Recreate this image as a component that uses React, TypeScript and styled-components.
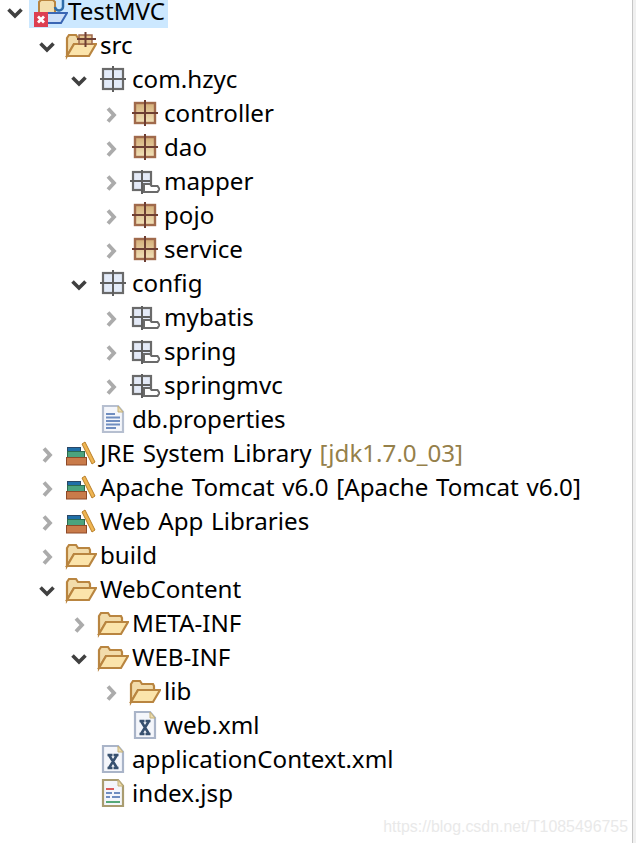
import React from "react";
import styled, { createGlobalStyle } from "styled-components";

const GlobalStyle = createGlobalStyle`
  html, body {
    margin: 0;
    padding: 0;
    background: #ffffff;
    overflow: hidden;
  }
`;

const Page = styled.div`
  position: relative;
  width: 636px;
  height: 843px;
  overflow: hidden;
  background: #fff;
  box-shadow: inset -3px 0 0 #f0f0f0, inset -4px 0 0 #c6c6c6;
`;

const Tree = styled.ul`
  list-style: none;
  margin: -6px 0 0;
  padding: 0;
  font-family: "Noto Sans", "Open Sans", sans-serif;
  font-size: 24.15px;
  word-spacing: 1.5px;
  color: #000;
`;

const Row = styled.li<{ $depth: number }>`
  display: flex;
  align-items: center;
  height: 34px;
  padding-left: ${(p) => 5 + p.$depth * 32}px;
`;

const Twisty = styled.span`
  flex: none;
  width: 20px;
  height: 20px;
  margin-right: 4px;
  display: flex;
  align-items: center;
  justify-content: center;
`;

const Cell = styled.span<{ $selected?: boolean }>`
  display: flex;
  align-items: center;
  height: 100%;
  padding: 0 3px;
  ${(p) => p.$selected && "background: #cce8ff;"}
`;

const IconSlot = styled.span`
  flex: none;
  width: 32px;
  height: 32px;
  margin-right: 4px;
  display: flex;
  align-items: center;
  justify-content: flex-start;

  svg {
    flex: none;
  }
`;

const Label = styled.span`
  white-space: nowrap;
  line-height: 22px;
`;

const Decoration = styled.span`
  color: #95804a;
`;

const Watermark = styled.div`
  position: absolute;
  right: 8px;
  bottom: 7px;
  font-family: "Liberation Sans", Arial, sans-serif;
  font-size: 15.9px;
  color: #e9e9e9;
`;

const Chevron = ({ open }: { open: boolean }) =>
  open ? (
    <svg width="20" height="20" viewBox="0 0 20 20">
      <path d="M3.500 8.500l6.500 6.500 6.500-6.500" fill="none" stroke="#404040" strokeWidth="3.600" />
    </svg>
  ) : (
    <svg width="20" height="20" viewBox="0 0 20 20">
      <path d="M7 5.500l6 6.500-6 6.500" fill="none" stroke="#ababab" strokeWidth="3.800" />
    </svg>
  );

const PackageIcon = ({ tone }: { tone: "mono" | "brown" }) => (
  <svg width="32" height="32" viewBox="0 0 32 32">
    <defs>
      <linearGradient id="cellTan" x1="0" y1="0" x2="0" y2="1">
        <stop offset="0" stopColor="#d3ae78" />
        <stop offset="1" stopColor="#f1e2b9" />
      </linearGradient>
    </defs>
    {tone === "mono" ? (
      <>
        <rect x="7" y="6" width="20" height="20" fill="#e3ebf9" stroke="#6a6a6a" strokeWidth="2.200" />
        <path d="M17 3v26M4 16h26" stroke="#5f5f5f" strokeWidth="2" />
      </>
    ) : (
      <>
        <rect x="7" y="6" width="20" height="20" fill="url(#cellTan)" stroke="#a06a4c" strokeWidth="2.400" />
        <path d="M17 3v26M4 16h26" stroke="#6e3f33" strokeWidth="2" />
      </>
    )}
  </svg>
);

const FolderPackageIcon = () => (
  <svg width="32" height="32" viewBox="0 0 32 32">
    <rect x="5" y="7" width="18" height="18" fill="#e4eaf7" stroke="#6a6a6a" strokeWidth="2.200" />
    <path d="M14 5v24M2 16h20" stroke="#5f5f5f" strokeWidth="2" />
    <path d="M16 27v-8h6l1.500 2h6l2 3-2 3z" fill="#fff" stroke="#6a6a6a" strokeWidth="2" />
  </svg>
);

const FolderShape = () => (
  <g>
    <path d="M3 27V9l2-3h7l2 3h11l1 2v4H10z" fill="#f2dcab" stroke="#b98540" strokeWidth="2.200" />
    <path d="M3 27l7-12h22l-7 12z" fill="#fbe4ab" stroke="#b98540" strokeWidth="2.200" />
  </g>
);

const FolderIcon = () => (
  <svg width="33" height="32" viewBox="0 0 33 32">
    <FolderShape />
  </svg>
);

const SourceFolderIcon = () => (
  <svg width="33" height="32" viewBox="0 0 33 32">
    <FolderShape />
    <path d="M15 6h13v9H15z" fill="#e3c48e" stroke="#a06a4c" strokeWidth="1.500" />
    <path d="M21.500 3v15M13 10h19" stroke="#6e3f33" strokeWidth="2" />
  </svg>
);

const ProjectIcon = () => (
  <svg width="36" height="32" viewBox="0 0 36 32">
    <path d="M7 18V7l2-2h12l2 2v11z" fill="#f4dfae" stroke="#b98540" strokeWidth="2" />
    <path d="M31 4v7a4 4 0 0 1-8 1" fill="none" stroke="#2f6ca8" strokeWidth="2.500" />
    <path d="M15 18h20l-6 10H12z" fill="#cddff8" stroke="#3a66b4" strokeWidth="2" />
    <rect x="2" y="17" width="14" height="15" fill="#dd3f51" />
    <path d="M6 21.500l6 6M12 21.500l-6 6" stroke="#fff" strokeWidth="2.800" />
  </svg>
);

const LibraryIcon = () => (
  <svg width="32" height="32" viewBox="0 0 32 32">
    <rect x="3.500" y="10.500" width="13" height="4" fill="#1f6fa8" stroke="#2a4766" />
    <rect x="3.500" y="14.500" width="17" height="6" fill="#4ba37e" stroke="#2c6a50" />
    <rect x="2.500" y="20.500" width="20" height="7.500" fill="#c97b4a" stroke="#8e4a28" />
    <path d="M18 7l3-2 10 20-3 2z" fill="#efb552" stroke="#b97f28" />
  </svg>
);

const PageOutline = ({ border }: { border: string }) => (
  <g>
    <path d="M7 3h15l5 6v20H7z" fill="#f4f6fb" stroke={border} strokeWidth="2.200" />
    <path d="M22 3v6h5z" fill="#ecdcae" stroke="#c4b078" strokeWidth="1" />
  </g>
);

const PropertiesIcon = () => (
  <svg width="32" height="32" viewBox="0 0 32 32">
    <PageOutline border="#b6bfd0" />
    <path d="M10 11h9M10 14.500h14M10 18h14M10 21.500h14M10 25h10" stroke="#6f8dc0" strokeWidth="1.800" />
  </svg>
);

const XmlIcon = () => (
  <svg width="32" height="32" viewBox="0 0 32 32">
    <PageOutline border="#a9b4c8" />
    <path d="M13 12l8 13M21 12l-8 13M11.500 12h5M17.500 12h5M11.500 25h5M17.500 25h5" stroke="#37506f" strokeWidth="2.600" />
  </svg>
);

const JspIcon = () => (
  <svg width="32" height="32" viewBox="0 0 32 32">
    <PageOutline border="#a99c70" />
    <path d="M10 12h8" stroke="#dc5a5a" strokeWidth="2" />
    <path d="M10 16h6M18 16h6M10 20h4M16 20h8" stroke="#6f8dc0" strokeWidth="2" />
    <path d="M10 25h14" stroke="#55a878" strokeWidth="2" />
  </svg>
);

type Item = {
  depth: number;
  open?: boolean;
  icon: React.ReactNode;
  label: string;
  note?: string;
  selected?: boolean;
};

const items: Item[] = [
  { depth: 0, open: true, icon: <ProjectIcon />, label: "TestMVC", selected: true },
  { depth: 1, open: true, icon: <SourceFolderIcon />, label: "src" },
  { depth: 2, open: true, icon: <PackageIcon tone="mono" />, label: "com.hzyc" },
  { depth: 3, open: false, icon: <PackageIcon tone="brown" />, label: "controller" },
  { depth: 3, open: false, icon: <PackageIcon tone="brown" />, label: "dao" },
  { depth: 3, open: false, icon: <FolderPackageIcon />, label: "mapper" },
  { depth: 3, open: false, icon: <PackageIcon tone="brown" />, label: "pojo" },
  { depth: 3, open: false, icon: <PackageIcon tone="brown" />, label: "service" },
  { depth: 2, open: true, icon: <PackageIcon tone="mono" />, label: "config" },
  { depth: 3, open: false, icon: <FolderPackageIcon />, label: "mybatis" },
  { depth: 3, open: false, icon: <FolderPackageIcon />, label: "spring" },
  { depth: 3, open: false, icon: <FolderPackageIcon />, label: "springmvc" },
  { depth: 2, icon: <PropertiesIcon />, label: "db.properties" },
  { depth: 1, open: false, icon: <LibraryIcon />, label: "JRE System Library", note: "[jdk1.7.0_03]" },
  { depth: 1, open: false, icon: <LibraryIcon />, label: "Apache Tomcat v6.0 [Apache Tomcat v6.0]" },
  { depth: 1, open: false, icon: <LibraryIcon />, label: "Web App Libraries" },
  { depth: 1, open: false, icon: <FolderIcon />, label: "build" },
  { depth: 1, open: true, icon: <FolderIcon />, label: "WebContent" },
  { depth: 2, open: false, icon: <FolderIcon />, label: "META-INF" },
  { depth: 2, open: true, icon: <FolderIcon />, label: "WEB-INF" },
  { depth: 3, open: false, icon: <FolderIcon />, label: "lib" },
  { depth: 3, icon: <XmlIcon />, label: "web.xml" },
  { depth: 2, icon: <XmlIcon />, label: "applicationContext.xml" },
  { depth: 2, icon: <JspIcon />, label: "index.jsp" },
];

const App = () => (
  <Page>
    <GlobalStyle />
    <Tree>
      {items.map((item) => (
        <Row key={item.label} $depth={item.depth}>
          <Twisty>{item.open !== undefined && <Chevron open={item.open} />}</Twisty>
          <Cell $selected={item.selected}>
            <IconSlot>{item.icon}</IconSlot>
            <Label>
              {item.label}
              {item.note && <Decoration> {item.note}</Decoration>}
            </Label>
          </Cell>
        </Row>
      ))}
    </Tree>
    <Watermark>https://blog.csdn.net/T1085496755</Watermark>
  </Page>
);

export default App;
